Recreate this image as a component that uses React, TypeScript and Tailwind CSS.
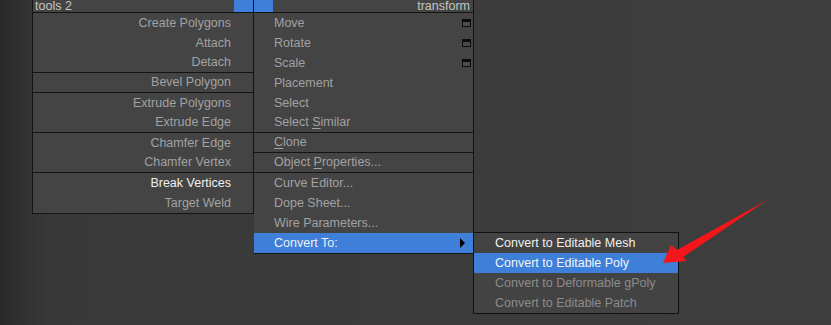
import React from 'react';

type Item = { label: React.ReactNode; bright?: boolean; sep?: boolean; win?: boolean };

const u = (s: string) => <span className="underline underline-offset-2">{s}</span>;

const leftItems: Item[] = [
  { label: 'Create Polygons' },
  { label: 'Attach' },
  { label: 'Detach', sep: true },
  { label: 'Bevel Polygon', sep: true },
  { label: 'Extrude Polygons' },
  { label: 'Extrude Edge', sep: true },
  { label: 'Chamfer Edge' },
  { label: 'Chamfer Vertex', sep: true },
  { label: 'Break Vertices', bright: true },
  { label: 'Target Weld' },
];

const rightItems: Item[] = [
  { label: 'Move', win: true },
  { label: 'Rotate', win: true },
  { label: 'Scale', win: true },
  { label: 'Placement' },
  { label: 'Select' },
  { label: <>Select {u('S')}imilar</>, sep: true },
  { label: <>{u('C')}lone</>, sep: true },
  { label: <>Object {u('P')}roperties...</>, sep: true },
  { label: 'Curve Editor...' },
  { label: 'Dope Sheet...' },
  { label: 'Wire Parameters...' },
];

function WinIcon() {
  return <span className="block w-[9px] h-[8px] border border-t-[3px] border-[#0c0c0c] bg-[#4a4a4a]" />;
}

export default function App() {
  return (
    <div
      className="relative w-[831px] h-[325px] overflow-hidden bg-gradient-to-r from-[#2a2a2a] via-[#393939] via-[6%] to-[#3e3e3e] text-[12.5px] leading-none"
      style={{ fontFamily: '"Liberation Sans", Arial, sans-serif' }}
    >
      <div className="flex items-start pl-[32px]">
        {/* tools 2 */}
        <div className="w-[222px] bg-[#444444] border-l border-r border-b border-[#141414]">
          <div className="h-[13px] flex items-end justify-between border-b border-[#141414] overflow-hidden">
            <span className="pl-[2px] text-[#c4c4c4] leading-[14px] -mb-[1px]">tools 2</span>
            <span className="w-[19px] h-[12px] bg-[#3d7fd9]" />
          </div>
          {leftItems.map((it, i) => (
            <div
              key={i}
              className={`h-[20px] flex items-center justify-end pr-[22px] ${it.sep ? 'border-b border-[#141414]' : ''} ${it.bright ? 'text-[#f0f0f0]' : 'text-[#a2a2a2]'}`}
            >
              {it.label}
            </div>
          ))}
        </div>

        {/* transform */}
        <div className="w-[220px] bg-[#444444] border-r border-b border-[#141414]">
          <div className="h-[13px] flex items-end justify-between border-b border-[#141414] overflow-hidden">
            <span className="w-[19px] h-[12px] bg-[#3d7fd9]" />
            <span className="pr-[3px] text-[#c4c4c4] leading-[14px] -mb-[1px]">transform</span>
          </div>
          {rightItems.map((it, i) => (
            <div
              key={i}
              className={`h-[20px] flex items-center justify-between pl-[20px] pr-[2px] text-[#a2a2a2] ${it.sep ? 'border-b border-[#141414]' : ''}`}
            >
              <span>{it.label}</span>
              {it.win && <WinIcon />}
            </div>
          ))}
          <div className="h-[20px] flex items-center justify-between pl-[20px] pr-[8px] bg-[#3d7fd9] text-[#f0f0f0]">
            <span>Convert To:</span>
            <span className="w-0 h-0 border-y-[5px] border-y-transparent border-l-[5px] border-l-black" />
          </div>
        </div>
      </div>

      {/* submenu */}
      <div className="absolute left-[473px] top-[232px] w-[206px] bg-[#434343] border border-[#111111]">
        <div className="h-[20px] flex items-center pl-[21px] text-[#f0f0f0]">Convert to Editable Mesh</div>
        <div className="h-[20px] flex items-center pl-[21px] bg-[#3d7fd9] text-[#f4f4f4]">Convert to Editable Poly</div>
        <div className="h-[20px] flex items-center pl-[21px] text-[#8c8c8c]">Convert to Deformable gPoly</div>
        <div className="h-[20px] flex items-center pl-[21px] text-[#8c8c8c]">Convert to Editable Patch</div>
      </div>

      {/* red arrow */}
      <svg className="absolute left-0 top-0" width="831" height="325" viewBox="0 0 831 325">
        <polygon
          points="663,263 671,245 677,250 769,199 683,257 687,261"
          fill="#f4161a"
        />
      </svg>
    </div>
  );
}
